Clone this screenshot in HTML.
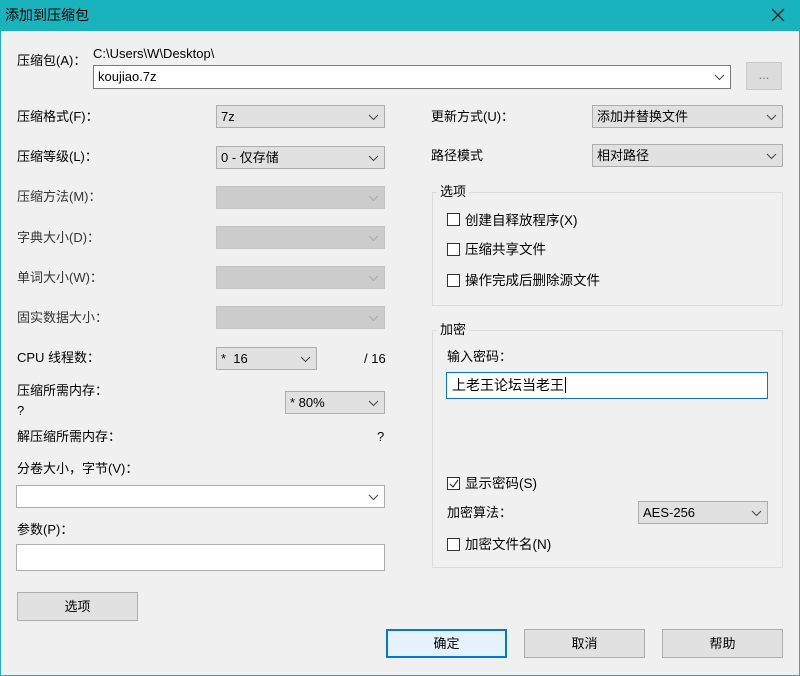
<!DOCTYPE html>
<html><head><meta charset="utf-8"><style>
*{box-sizing:border-box;margin:0;padding:0}
body{width:800px;height:676px;overflow:hidden;background:#f0f0f0;font-family:"Liberation Sans","Noto Sans CJK SC",sans-serif;font-size:13px;color:#000;position:relative}
.a{position:absolute;white-space:nowrap;line-height:16px}
.tb{position:absolute;left:0;top:0;width:800px;height:31px;background:#19b3bd}
.frame{position:absolute;left:0;top:0;width:800px;height:676px;border:1px solid #19b3bd;pointer-events:none}
.cb{position:absolute;background:#e1e1e1;border:1px solid #adadad;height:23px;padding:3px 0 0 4px;line-height:16px}
.cb.d{background:#cccccc;border-color:#c4c4c4}
.cb.w{background:#fff;border-color:#7a7a7a}
.cb svg{position:absolute;right:5px;top:8px}
.btn{position:absolute;background:#e1e1e1;border:1px solid #adadad;text-align:center;line-height:27px}
.grp{position:absolute;border:1px solid #dcdcdc}
.gt{position:absolute;background:#f0f0f0;padding:0 3px;line-height:16px}
.ck{position:absolute;width:13px;height:13px;border:1px solid #333;background:#fff}
.ct{font-size:13.5px}
</style></head><body>
<div class="tb"></div>
<div class="a" style="left:5px;top:7px;font-size:14px">添加到压缩包</div>
<svg class="a" style="left:771px;top:8px" width="14" height="14"><path d="M1 1L13 13M13 1L1 13" stroke="#222" stroke-width="1.3"/></svg>

<div class="a" style="left:17px;top:53px">压缩包(A)：</div>
<div class="a" style="left:93px;top:46px">C:\Users\W\Desktop\</div>
<div class="cb w" style="left:93px;top:65px;width:638px;height:24px;padding-top:3px">koujiao.7z<svg width="11" height="7"><path d="M1 1L5.5 5.5L10 1" fill="none" stroke="#444"/></svg></div>
<div class="btn" style="left:746px;top:62px;width:36px;height:28px;background:#dcdcdc;border-color:#c8c8c8;color:#777;line-height:24px">...</div>

<div class="a" style="left:17px;top:109px">压缩格式(F)：</div>
<div class="cb" style="left:216px;top:105px;width:169px">7z<svg width="11" height="7"><path d="M1 1L5.5 5.5L10 1" fill="none" stroke="#444"/></svg></div>
<div class="a" style="left:17px;top:149px">压缩等级(L)：</div>
<div class="cb" style="left:216px;top:146px;width:169px">0 - 仅存储<svg width="11" height="7"><path d="M1 1L5.5 5.5L10 1" fill="none" stroke="#444"/></svg></div>
<div class="a" style="left:17px;top:189px;color:#333">压缩方法(M)：</div>
<div class="cb d" style="left:216px;top:186px;width:169px"><svg width="11" height="7"><path d="M1 1L5.5 5.5L10 1" fill="none" stroke="#aaa"/></svg></div>
<div class="a" style="left:17px;top:230px;color:#333">字典大小(D)：</div>
<div class="cb d" style="left:216px;top:226px;width:169px"><svg width="11" height="7"><path d="M1 1L5.5 5.5L10 1" fill="none" stroke="#aaa"/></svg></div>
<div class="a" style="left:17px;top:270px;color:#333">单词大小(W)：</div>
<div class="cb d" style="left:216px;top:266px;width:169px"><svg width="11" height="7"><path d="M1 1L5.5 5.5L10 1" fill="none" stroke="#aaa"/></svg></div>
<div class="a" style="left:17px;top:310px;color:#333">固实数据大小：</div>
<div class="cb d" style="left:216px;top:306px;width:169px"><svg width="11" height="7"><path d="M1 1L5.5 5.5L10 1" fill="none" stroke="#aaa"/></svg></div>
<div class="a" style="left:17px;top:350px">CPU 线程数：</div>
<div class="cb" style="left:216px;top:347px;width:101px">*&nbsp; 16<svg width="11" height="7"><path d="M1 1L5.5 5.5L10 1" fill="none" stroke="#444"/></svg></div>
<div class="a" style="left:364px;top:351px">/ 16</div>
<div class="a" style="left:17px;top:383px">压缩所需内存：</div>
<div class="a" style="left:17px;top:403px">?</div>
<div class="cb" style="left:285px;top:391px;width:100px">* 80%<svg width="11" height="7"><path d="M1 1L5.5 5.5L10 1" fill="none" stroke="#444"/></svg></div>
<div class="a" style="left:17px;top:429px">解压缩所需内存：</div>
<div class="a" style="left:377px;top:429px">?</div>
<div class="a" style="left:17px;top:461px">分卷大小，字节(V)：</div>
<div class="cb w" style="left:16px;top:485px;width:369px;border-color:#adadad"><svg width="11" height="7"><path d="M1 1L5.5 5.5L10 1" fill="none" stroke="#444"/></svg></div>
<div class="a" style="left:17px;top:522px">参数(P)：</div>
<div class="cb w" style="left:16px;top:544px;width:369px;height:27px;border-color:#adadad"></div>
<div class="btn" style="left:17px;top:592px;width:121px;height:29px">选项</div>

<div class="a" style="left:431px;top:109px">更新方式(U)：</div>
<div class="cb" style="left:592px;top:105px;width:191px">添加并替换文件<svg width="11" height="7"><path d="M1 1L5.5 5.5L10 1" fill="none" stroke="#444"/></svg></div>
<div class="a" style="left:431px;top:148px">路径模式</div>
<div class="cb" style="left:592px;top:144px;width:191px">相对路径<svg width="11" height="7"><path d="M1 1L5.5 5.5L10 1" fill="none" stroke="#444"/></svg></div>

<div class="grp" style="left:432px;top:192px;width:351px;height:114px"></div>
<div class="gt" style="left:437px;top:184px">选项</div>
<div class="ck" style="left:447px;top:213px"></div><div class="a ct" style="left:465px;top:213px">创建自释放程序(X)</div>
<div class="ck" style="left:447px;top:243px"></div><div class="a ct" style="left:465px;top:242px">压缩共享文件</div>
<div class="ck" style="left:447px;top:274px"></div><div class="a ct" style="left:465px;top:273px">操作完成后删除源文件</div>

<div class="grp" style="left:432px;top:330px;width:351px;height:238px"></div>
<div class="gt" style="left:437px;top:322px">加密</div>
<div class="a" style="left:447px;top:349px">输入密码：</div>
<div class="a" style="left:446px;top:372px;width:322px;height:27px;background:#fff;border:1px solid #0078d7;padding:4px 0 0 5px;font-size:14px;line-height:17px">上老王论坛当老王<span style="border-left:1px solid #000;margin-left:1px"></span></div>
<div class="ck" style="left:447px;top:477px"><svg style="position:absolute;left:1px;top:1px" width="10" height="10"><path d="M1 5L4 8L9 1" fill="none" stroke="#333" stroke-width="1.2"/></svg></div><div class="a ct" style="left:465px;top:476px">显示密码(S)</div>
<div class="a" style="left:447px;top:505px">加密算法：</div>
<div class="cb" style="left:638px;top:501px;width:130px">AES-256<svg width="11" height="7"><path d="M1 1L5.5 5.5L10 1" fill="none" stroke="#444"/></svg></div>
<div class="ck" style="left:447px;top:538px"></div><div class="a ct" style="left:465px;top:537px">加密文件名(N)</div>

<div class="btn" style="left:386px;top:629px;width:121px;height:29px;border:1px solid #0078d7;box-shadow:inset 0 0 0 1px #0078d7;background:#e5f1fb">确定</div>
<div class="btn" style="left:524px;top:629px;width:121px;height:29px">取消</div>
<div class="btn" style="left:662px;top:629px;width:121px;height:29px">帮助</div>
<div class="frame"></div>
</body></html>
